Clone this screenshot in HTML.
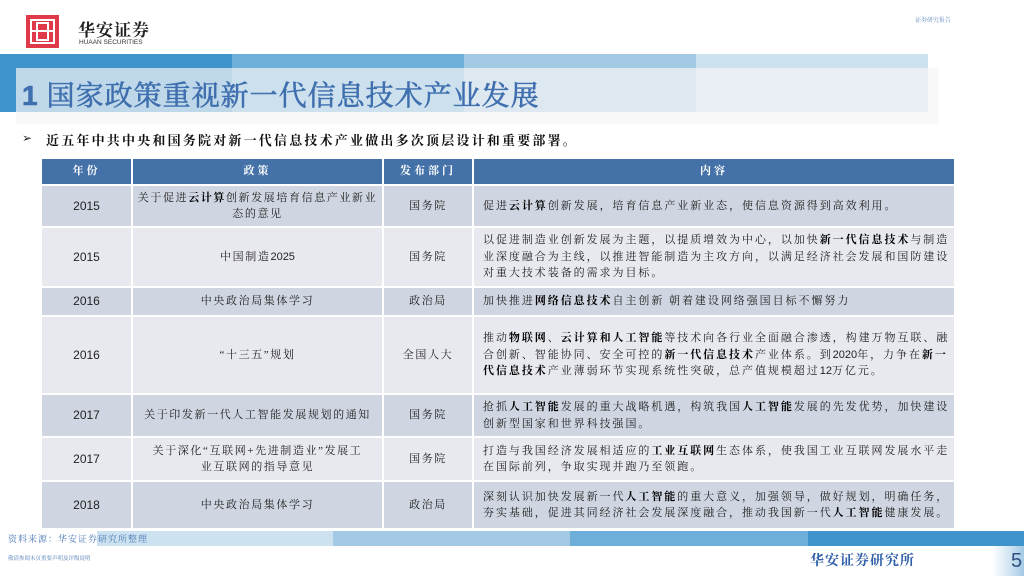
<!DOCTYPE html>
<html><head><meta charset="utf-8"><style>
*{margin:0;padding:0;box-sizing:border-box}
body{width:1024px;height:576px;overflow:hidden;background:#fff;position:relative;font-family:"Liberation Serif","Noto Serif CJK SC",serif;color:#222}
.a{position:absolute}
table{position:absolute;left:40px;top:157px;width:916px;border-collapse:collapse;table-layout:fixed}
td{border:2px solid #fff;font-size:11px;text-align:center;vertical-align:middle;line-height:16.5px;letter-spacing:1.6px}
tr.h td{background:#4472a8;color:#fff;height:27px;letter-spacing:3px;font-weight:bold}
tr.d td{background:#cfd5e1}
tr.l td{background:#e8e9ef}
td.y{font-family:"Liberation Sans",sans-serif;font-size:12px;letter-spacing:0}
td.c{text-align:left;padding-left:9px;padding-right:2px;letter-spacing:1.95px}
b{font-weight:bold;color:#000}
</style></head><body>
<div class="a" style="left:26px;top:15px;width:33px;height:33px;background:#e03a4a"></div>
<div class="a" style="left:30px;top:19px;width:25px;height:25px;border:2px solid #fff"></div>
<div class="a" style="left:36px;top:22px;width:13px;height:19px;border:2px solid #fff"></div>
<div class="a" style="left:32px;top:30px;width:21px;height:2px;background:#fff"></div>
<div class="a" style="left:78px;top:16px;font-size:17px;font-weight:bold;color:#222;letter-spacing:1px">华安证券</div>
<div class="a" style="left:79px;top:39px;font-size:6.5px;font-family:'Liberation Sans',sans-serif;color:#333">HUAAN SECURITIES</div>
<div class="a" style="left:915px;top:15px;font-size:6px;color:#6a8fc0">证券研究报告</div>

<div class="a" style="left:0;top:54px;width:232px;height:58px;background:#3f94cb"></div>
<div class="a" style="left:232px;top:54px;width:232px;height:58px;background:#6eafda"></div>
<div class="a" style="left:464px;top:54px;width:232px;height:58px;background:#a3c9e5"></div>
<div class="a" style="left:696px;top:54px;width:232px;height:58px;background:#cde2f1"></div>
<div class="a" style="left:16px;top:68px;width:923px;height:56px;background:rgba(245,245,245,.7)"></div>
<div class="a" style="left:22px;top:74px;font-size:28px;color:#3f6fae;font-weight:normal;letter-spacing:1px;white-space:nowrap;-webkit-text-stroke:0.6px #3f6fae"><span style="font-family:'Liberation Sans',sans-serif;font-weight:bold">1</span> 国家政策重视新一代信息技术产业发展</div>

<div class="a" style="left:22px;top:131px;font-size:12px;font-family:'DejaVu Sans',sans-serif">➢</div>
<div class="a" style="left:46px;top:130px;font-size:13px;font-weight:bold;color:#111;letter-spacing:2.2px;white-space:nowrap">近五年中共中央和国务院对新一代信息技术产业做出多次顶层设计和重要部署。</div>

<table>
<colgroup><col style="width:91px"><col style="width:251px"><col style="width:90px"><col></colgroup>
<tr class="h"><td>年份</td><td>政策</td><td>发布部门</td><td>内容</td></tr>
<tr class="d" style="height:42px"><td class="y">2015</td><td style="padding:0 4px">关于促进<b>云计算</b>创新发展培育信息产业新业态的意见</td><td>国务院</td><td class="c">促进<b>云计算</b>创新发展，培育信息产业新业态，使信息资源得到高效利用。</td></tr>
<tr class="l" style="height:60px"><td class="y">2015</td><td>中国制造<span style="font-family:'Liberation Sans';letter-spacing:0">2025</span></td><td>国务院</td><td class="c">以促进制造业创新发展为主题，以提质增效为中心，以加快<b>新一代信息技术</b>与制造业深度融合为主线，以推进智能制造为主攻方向，以满足经济社会发展和国防建设对重大技术装备的需求为目标。</td></tr>
<tr class="d" style="height:29px"><td class="y">2016</td><td>中央政治局集体学习</td><td>政治局</td><td class="c">加快推进<b>网络信息技术</b>自主创新 朝着建设网络强国目标不懈努力</td></tr>
<tr class="l" style="height:78px"><td class="y">2016</td><td>“十三五”规划</td><td>全国人大</td><td class="c">推动<b>物联网</b>、<b>云计算和人工智能</b>等技术向各行业全面融合渗透，构建万物互联、融合创新、智能协同、安全可控的<b>新一代信息技术</b>产业体系。到<span style="font-family:'Liberation Sans';letter-spacing:0">2020</span>年，力争在<b>新一代信息技术</b>产业薄弱环节实现系统性突破，总产值规模超过<span style="font-family:'Liberation Sans';letter-spacing:0">12</span>万亿元。</td></tr>
<tr class="d" style="height:43px"><td class="y">2017</td><td>关于印发新一代人工智能发展规划的通知</td><td>国务院</td><td class="c">抢抓<b>人工智能</b>发展的重大战略机遇，构筑我国<b>人工智能</b>发展的先发优势，加快建设创新型国家和世界科技强国。</td></tr>
<tr class="l" style="height:44px"><td class="y">2017</td><td style="padding:0 14px">关于深化“互联网+先进制造业”发展工业互联网的指导意见</td><td>国务院</td><td class="c">打造与我国经济发展相适应的<b>工业互联网</b>生态体系，使我国工业互联网发展水平走在国际前列，争取实现并跑乃至领跑。</td></tr>
<tr class="d" style="height:48px"><td class="y">2018</td><td>中央政治局集体学习</td><td>政治局</td><td class="c">深刻认识加快发展新一代<b>人工智能</b>的重大意义，加强领导，做好规划，明确任务，夯实基础，促进其同经济社会发展深度融合，推动我国新一代<b>人工智能</b>健康发展。</td></tr>
</table>

<div class="a" style="left:97px;top:531px;width:236px;height:15px;background:#cde2f1"></div>
<div class="a" style="left:333px;top:531px;width:237px;height:15px;background:#a3c9e5"></div>
<div class="a" style="left:570px;top:531px;width:238px;height:15px;background:#6eafda"></div>
<div class="a" style="left:808px;top:531px;width:216px;height:15px;background:#3f94cb"></div>
<div class="a" style="left:8px;top:532px;font-size:9px;color:#4a78b5;letter-spacing:1px">资料来源：华安证券研究所整理</div>
<div class="a" style="left:8px;top:554px;font-size:5.5px;color:#4a78b5">敬请参阅末页重要声明及评级说明</div>
<div class="a" style="left:810px;top:550px;font-size:14px;font-weight:bold;color:#2e5fa8;letter-spacing:1px">华安证券研究所</div>
<div class="a" style="left:992px;top:546px;width:32px;height:30px;background:linear-gradient(90deg,#fff,#cde2f1 60%,#a3c9e5)"></div>
<div class="a" style="left:1011px;top:550px;font-size:20px;font-family:'Liberation Sans',sans-serif;color:#2e4f80">5</div>
</body></html>
